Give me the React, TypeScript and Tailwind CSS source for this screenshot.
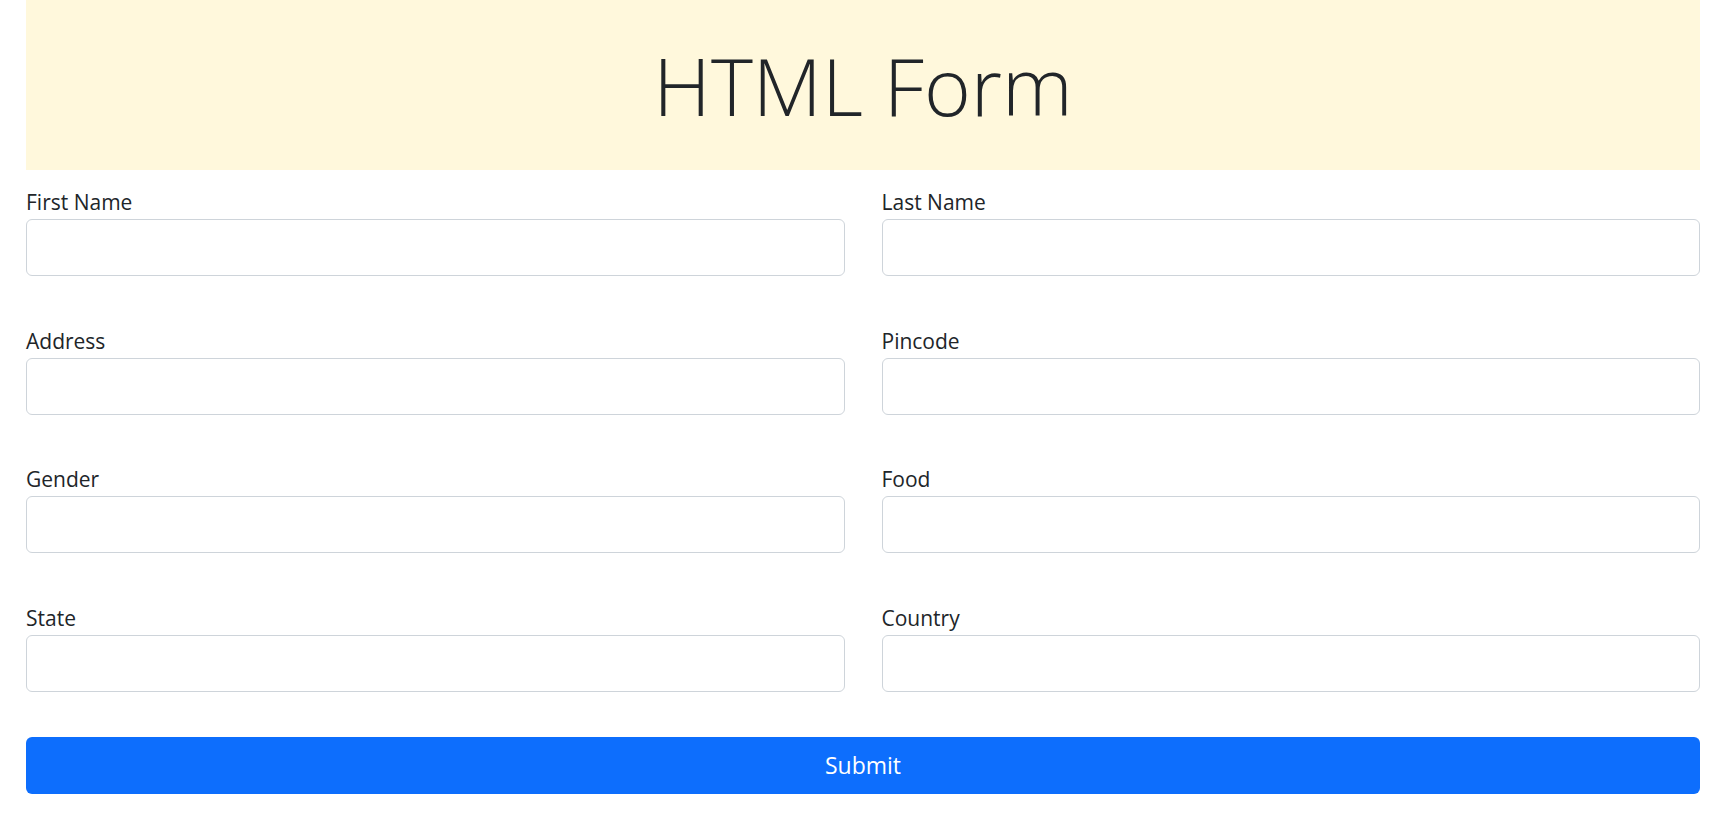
const fields = [
  ["First Name", "Last Name"],
  ["Address", "Pincode"],
  ["Gender", "Food"],
  ["State", "Country"],
];

function Field({ label }: { label: string }) {
  const id = label.toLowerCase().replace(" ", "-");
  return (
    <div className="flex flex-col">
      <label htmlFor={id} className="h-[34px] pt-[1px] text-[21px] leading-[33px] text-[#212529]">
        {label}
      </label>
      <input
        id={id}
        type="text"
        className="h-[57px] w-full rounded-[6px] border border-[#ced4da] bg-white px-4 text-[22px] text-[#212529] outline-none focus:border-[#86b7fe]"
      />
    </div>
  );
}

export default function App() {
  return (
    <div className="min-h-screen bg-white font-['Open_Sans',sans-serif] text-[#212529]">
      <div className="ml-[26px] mr-[25px]">
        {/* Header */}
        <div className="flex h-[170px] items-center justify-center bg-[#fff8dc]">
          <h1 className="text-[80px] font-light leading-[1.2]">HTML Form</h1>
        </div>

        <form className="pt-[15px]" onSubmit={(e) => e.preventDefault()}>
          <div className="grid grid-cols-2 gap-x-[37px] gap-y-[47.5px]">
            {fields.flat().map((label) => (
              <Field key={label} label={label} />
            ))}
          </div>

          <button
            type="submit"
            className="mt-[45.5px] h-[57px] w-full rounded-[6px] bg-[#0d6efd] text-[23px] text-white hover:bg-[#0b5ed7]"
          >
            Submit
          </button>
        </form>
      </div>
    </div>
  );
}
